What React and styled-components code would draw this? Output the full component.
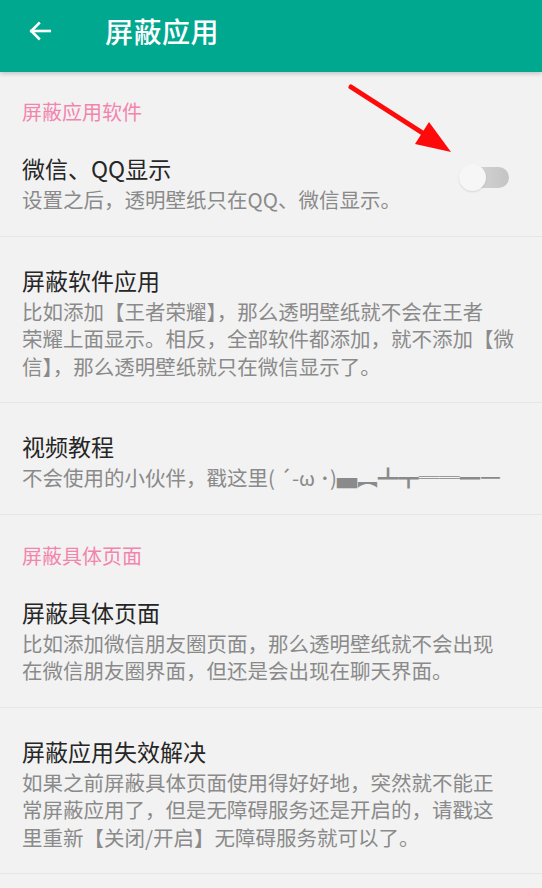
import React from "react";
import styled, { createGlobalStyle } from "styled-components";

const GlobalStyle = createGlobalStyle`
	html, body {
		margin: 0;
		padding: 0;
		background: #f2f2f2;
	}
	body {
		font-family: "Noto Sans CJK SC", "Noto Sans", sans-serif;
	}
`;

const Page = styled.div`
	position: relative;
	width: 542px;
	height: 888px;
	overflow: hidden;
	background: #f2f2f2;
`;

const AppBar = styled.header`
	height: 72px;
	box-sizing: border-box;
	padding: 0 0 10px 26px;
	background: #00a88f;
	display: flex;
	align-items: center;
	box-shadow: 0 2px 4px rgba(0, 0, 0, 0.18);
	position: relative;
	z-index: 1;
`;

const BackButton = styled.button`
	width: 28px;
	height: 28px;
	padding: 0;
	border: none;
	background: none;
	display: flex;
	align-items: center;
	justify-content: center;
`;

const Title = styled.h1`
	margin: 0 0 0 51px;
	font-size: 28px;
	line-height: 36px;
	font-weight: 500;
	color: #ffffff;
	letter-spacing: 0.5px;
`;

const SectionHeader = styled.div`
	padding: ${(p) => (p.$first ? "27px" : "28px")} 22px 0;
	font-size: 20px;
	line-height: 26px;
	height: 26px;
	color: #f385ad;
`;

const Item = styled.div`
	display: flex;
	align-items: center;
	padding: 28px 22px 22px;
	border-bottom: 1px solid #e6e6e6;
`;

const ItemText = styled.div`
	flex: 1;
`;

const ItemTitle = styled.div`
	font-size: 23px;
	line-height: 30px;
	height: 30px;
	color: #262626;
`;

const ItemDesc = styled.div`
	margin-top: ${(p) => (p.$first ? "3px" : "0")};
	font-size: 20.5px;
	line-height: 27.5px;
	height: 27.5px;
	color: #8a8a8a;
	white-space: nowrap;
`;

const Switch = styled.div`
	position: relative;
	width: 40px;
	height: 21px;
	margin: 0 11px 12px 0;
	border-radius: 11px;
	background: linear-gradient(90deg, #d6d6d6, #c4c4c4);
	flex-shrink: 0;
`;

const Thumb = styled.span`
	position: absolute;
	left: -10px;
	top: -3px;
	width: 27px;
	height: 27px;
	border-radius: 50%;
	background: #f6f6f6;
	box-shadow: 0 1px 2px rgba(0, 0, 0, 0.12);
`;

const Annotation = styled.svg`
	position: absolute;
	left: 0;
	top: 0;
	pointer-events: none;
	z-index: 2;
`;

const Arrow = () => (
	<Annotation width="542" height="888" viewBox="0 0 542 888">
		<line x1="351" y1="87" x2="432" y2="139" stroke="#ff0a0a" strokeWidth="5" strokeLinecap="round" />
		<polygon points="451,152 415,144 429,122" fill="#ff0a0a" />
	</Annotation>
);

const items = [
	{ title: "微信、QQ显示", desc: ["设置之后，透明壁纸只在QQ、微信显示。"], toggle: true },
	{
		title: "屏蔽软件应用",
		desc: [
			"比如添加【王者荣耀】，那么透明壁纸就不会在王者",
			"荣耀上面显示。相反，全部软件都添加，就不添加【微",
			"信】，那么透明壁纸就只在微信显示了。",
		],
	},
	{ title: "视频教程", desc: ["不会使用的小伙伴，戳这里( ´-ω ･)▄︻┻┳══━一"] },
];

const pageItems = [
	{
		title: "屏蔽具体页面",
		desc: ["比如添加微信朋友圈页面，那么透明壁纸就不会出现", "在微信朋友圈界面，但还是会出现在聊天界面。"],
	},
	{
		title: "屏蔽应用失效解决",
		desc: [
			"如果之前屏蔽具体页面使用得好好地，突然就不能正",
			"常屏蔽应用了，但是无障碍服务还是开启的，请戳这",
			"里重新【关闭/开启】无障碍服务就可以了。",
		],
	},
];

const Row = ({ title, desc, toggle }) => (
	<Item>
		<ItemText>
			<ItemTitle>{title}</ItemTitle>
			{desc.map((line, i) => (
				<ItemDesc key={line} $first={i === 0}>
					{line}
				</ItemDesc>
			))}
		</ItemText>
		{toggle && (
			<Switch>
				<Thumb />
			</Switch>
		)}
	</Item>
);

export default function App() {
	return (
		<Page>
			<GlobalStyle />
			<AppBar>
				<BackButton aria-label="back">
					<svg width="26" height="26" viewBox="0 0 24 24" fill="none" stroke="#fff" strokeWidth="2.4" strokeLinecap="square">
						<path d="M21 12H4" />
						<path d="M11 5l-7 7 7 7" />
					</svg>
				</BackButton>
				<Title>屏蔽应用</Title>
			</AppBar>

			<SectionHeader $first>屏蔽应用软件</SectionHeader>
			{items.map((it) => (
				<Row key={it.title} {...it} />
			))}

			<SectionHeader>屏蔽具体页面</SectionHeader>
			{pageItems.map((it) => (
				<Row key={it.title} {...it} />
			))}

			<Arrow />
		</Page>
	);
}
